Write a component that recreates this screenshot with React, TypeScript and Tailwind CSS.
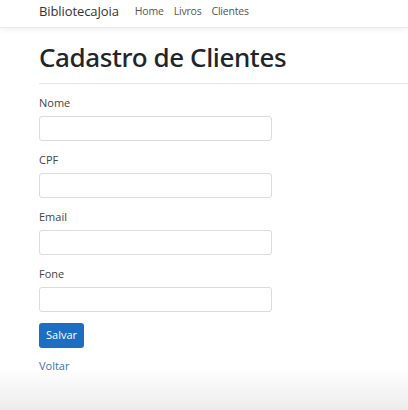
import React from "react";

export default function App() {
  const fields = ["Nome", "CPF", "Email", "Fone"];
  return (
    <div className="relative w-[408px] h-[410px] overflow-hidden bg-white text-[#212529]" style={{ fontFamily: '"Open Sans", "Noto Sans", sans-serif' }}>
      <div className="absolute left-0 right-0 bottom-0 h-[42px] bg-gradient-to-b from-white to-[#ececec]" />
      <div className="relative">
        <nav className="h-[28px] flex items-start pt-[3px] pl-[39px] border-b border-[#e8e8e8] shadow-[0_2px_6px_rgba(0,0,0,0.06)]">
          <span className="text-[13px] text-[#333] mr-[16px] leading-[17px] tracking-[-0.1px]">BibliotecaJoia</span>
          <div className="flex gap-[10px] text-[10.5px] text-[#555] leading-[17px] tracking-[-0.2px]">
            <span>Home</span>
            <span>Livros</span>
            <span>Clientes</span>
          </div>
        </nav>
        <div className="pl-[39px]">
          <h1 className="mt-[11px] text-[26px] font-medium leading-[36px] text-[#212529] tracking-[-0.4px]" style={{ fontFamily: '"Noto Sans", "Open Sans", sans-serif' }}>Cadastro de Clientes</h1>
          <div className="mt-[8px] h-px bg-[#e6e6e6]" />
          <form className="flex flex-col mt-[11px]">
            {fields.map((f) => (
              <div key={f} className="flex flex-col mb-[11px]">
                <label className="text-[11px] text-[#444] leading-[16px] mb-[5px]">{f}</label>
                <input className="w-[233px] h-[25px] border border-[#dcdcdc] rounded-[3px] bg-white" />
              </div>
            ))}
            <button type="button" className="w-[45px] h-[25px] bg-[#1b6ec2] text-white text-[11px] rounded-[3px]">Salvar</button>
          </form>
          <a className="block mt-[10px] text-[11px] text-[#3f6fb0] leading-[16px]">Voltar</a>
        </div>
      </div>
    </div>
  );
}
